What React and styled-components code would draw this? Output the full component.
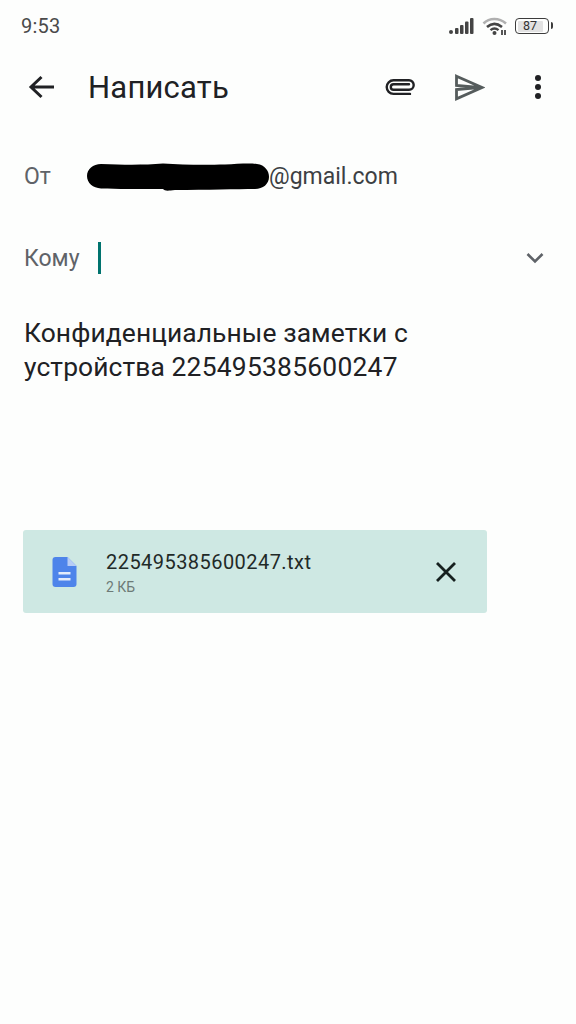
import React from "react";
import styled, { createGlobalStyle } from "styled-components";

const Global = createGlobalStyle`
  html, body { margin: 0; padding: 0; background: #fdfefd; }
  * { box-sizing: border-box; }
`;
const Page = styled.div`
  width: 576px; height: 1024px; overflow: hidden; background: #fdfefd;
  font-family: Roboto, "Liberation Sans", sans-serif; color: #202124;
  display: flex; flex-direction: column;
`;
const StatusBar = styled.div`
  height: 52px; padding: 0 24px 0 21px; display: flex; align-items: center; justify-content: space-between;
`;
const Time = styled.span`font-size: 20px; font-weight: 400; color: #4a4a4a; letter-spacing: .2px;`;
const StatusIcons = styled.div`display: flex; align-items: center; gap: 7px;`;
const Battery = styled.div`
  position: relative; width: 34px; height: 16px; border: 1.5px solid #3c3c3c; border-radius: 4px; padding: 1.5px;
  display: flex; margin-right: 3px;
  &::after { content: ""; position: absolute; right: -5px; top: 3px; width: 2px; height: 7px; background: #3c3c3c; border-radius: 0 2px 2px 0; }
`;
const BatteryFill = styled.div`
  width: 87%; background: #e2e2e2; font-size: 12.5px; line-height: 10px; text-align: center; color: #333; border-radius: 1px;
`;
const Toolbar = styled.div`height: 70px; display: flex; align-items: center; padding-left: 28px;`;
const Title = styled.h1`
  margin: 0 0 0 32px; font-size: 31px; font-weight: 400; color: #202124; flex: 1; letter-spacing: .2px;
`;
const IconSlot = styled.div`
  width: ${p => p.$w}px; display: flex; justify-content: center; align-items: center;
`;
const ToolbarEnd = styled.div`width: 21px;`;
const Row = styled.div`
  display: flex; align-items: center; height: ${p => p.$h}px; padding-left: 24px; margin-top: ${p => p.$mt || 0}px;
  font-size: 23px; position: relative;
`;
const Label = styled.span`color: #5f6368; width: ${p => p.$w}px;`;
const Email = styled.span`color: #3c4043; display: flex; align-items: center;`;
const Caret = styled.div`width: 3px; height: 32px; background: #00736e;`;
const Chevron = styled.div`position: absolute; right: 32px; top: 50%; transform: translateY(-50%); display: flex;`;
const Subject = styled.div`
  margin: 33px 24px 0; font-size: 26.400px; line-height: 34px; color: #202124; white-space: nowrap; letter-spacing: .1px;
`;
const SubjectNumber = styled.span`letter-spacing: .25px;`;
const Attachment = styled.div`
  margin: 146px 0 0 23px; width: 464px; height: 83px; background: #cee8e3; border-radius: 3px;
  display: flex; align-items: center; padding-left: 29px;
`;
const FileInfo = styled.div`margin-left: 29px; flex: 1; display: flex; flex-direction: column; gap: 3px; padding-top: 2px;`;
const FileName = styled.div`font-size: 20px; line-height: 26px; color: #1f2a28; letter-spacing: .45px;`;
const FileSize = styled.div`font-size: 14px; line-height: 18px; color: #6d7a77;`;
const Close = styled.div`display: flex; margin-right: 30px;`;

export default function App() {
  return (
    <Page>
      <Global />
      <StatusBar>
        <Time>9:53</Time>
        <StatusIcons>
          <svg width="26" height="18" viewBox="0 0 26 18" fill="#444">
            <circle cx="2" cy="15" r="2" />
            <rect x="6" y="11" width="3.5" height="6" rx="1" />
            <rect x="11" y="8" width="3.5" height="9" rx="1" />
            <rect x="16" y="4.500" width="3.5" height="12.500" rx="1" />
            <rect x="21" y="1" width="3.5" height="16" rx="1" />
          </svg>
          <svg width="26" height="20" viewBox="0 0 26 20" fill="none">
            <path d="M1.500 7.500C7.500 1.500 17 1.500 24 7.500" stroke="#b0b0b0" strokeWidth="2.600" />
            <path d="M5 11C9.500 7 15 7 20 11" stroke="#444" strokeWidth="2.600" />
            <path d="M8.500 14.200C11 12 14 12 16.500 14.200" stroke="#444" strokeWidth="2.400" />
            <circle cx="12.500" cy="17" r="2" fill="#444" />
            <path d="M20 14v5M23 14v5" stroke="#444" strokeWidth="1.800" />
          </svg>
          <Battery><BatteryFill>87</BatteryFill></Battery>
        </StatusIcons>
      </StatusBar>
      <Toolbar>
        <svg width="28" height="24" viewBox="0 0 28 24" fill="none" stroke="#202124" strokeWidth="3">
          <path d="M26 12H4M13.500 2 3 12l10.500 10" />
        </svg>
        <Title>Написать</Title>
        <IconSlot $w={38}>
          <svg width="30" height="18" viewBox="0 0 30 18" fill="none" stroke="#202124" strokeWidth="2.400" strokeLinecap="round">
            <path d="M24 6.300H8.500a2.700 2.700 0 0 0 0 5.400h15.500a4.700 4.700 0 0 0 0-9.400H8.500a6.800 6.800 0 0 0 0 13.600H25" />
          </svg>
        </IconSlot>
        <IconSlot $w={102}>
          <svg width="30" height="27" viewBox="0 0 30 27" fill="none" stroke="#555c5c" strokeWidth="2.800">
            <path d="M1.500 2.200 27 13.500 1.500 24.800V15.500L24 13.500 1.500 11.500Z" />
          </svg>
        </IconSlot>
        <IconSlot $w={34}>
          <svg width="8" height="26" viewBox="0 0 8 26" fill="#202124">
            <circle cx="4" cy="4" r="3" /><circle cx="4" cy="13" r="3" /><circle cx="4" cy="22" r="3" />
          </svg>
        </IconSlot>
        <ToolbarEnd />
      </Toolbar>
      <Row $h={50} $mt={29}>
        <Label $w={63}>От</Label>
        <Email>
          <svg width="182" height="29" viewBox="0 0 182 29">
            <path d="M14 2C40 3 58 3 76 1.500C96 3 120 3 138 2.500C150 2 162 1 170 2C178 3 182 9 182 15C182 22 176 27 168 27C150 27 120 28 88 28C80 29 78 29 76 27C50 27 30 27 14 26.500C6 26 0 21 0 14C0 7 6 2 14 2Z" fill="#000" />
          </svg>
          @gmail.com
        </Email>
      </Row>
      <Row $h={50} $mt={32}>
        <Label $w={74}>Кому</Label>
        <Caret />
        <Chevron>
          <svg width="18" height="12" viewBox="0 0 18 12" fill="none" stroke="#5f6368" strokeWidth="2.600">
            <path d="M1.500 2 9 9.500 16.500 2" />
          </svg>
        </Chevron>
      </Row>
      <Subject>Конфиденциальные заметки с<br />устройства <SubjectNumber>225495385600247</SubjectNumber></Subject>
      <Attachment>
        <svg width="25" height="30" viewBox="0 0 24 30">
          <path d="M3 0h12l9 9v18a3 3 0 0 1-3 3H3a3 3 0 0 1-3-3V3a3 3 0 0 1 3-3Z" fill="#4e84ea" />
          <path d="M15 0l9 9h-9Z" fill="#b8cdf6" />
          <path d="M6 15h12v2.500H6zM6 21h12v2.500H6z" fill="#e4ecfb" />
        </svg>
        <FileInfo>
          <FileName>225495385600247.txt</FileName>
          <FileSize>2 КБ</FileSize>
        </FileInfo>
        <Close>
          <svg width="22" height="22" viewBox="0 0 22 22" fill="none" stroke="#16201f" strokeWidth="2.800">
            <path d="M2 2l18 18M20 2 2 20" />
          </svg>
        </Close>
      </Attachment>
    </Page>
  );
}
